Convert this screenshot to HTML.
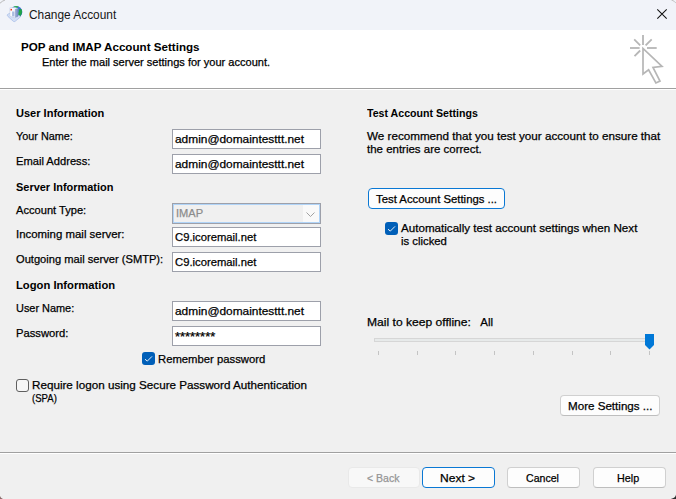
<!DOCTYPE html>
<html><head><meta charset="utf-8"><title>Change Account</title>
<style>
html,body{margin:0;padding:0}
body{width:676px;height:499px;overflow:hidden;background:#f0f0f0;position:relative;font-family:"Liberation Sans",sans-serif;font-size:12px;color:#000}
.t{position:absolute;white-space:nowrap;line-height:14px;transform-origin:0 0;-webkit-text-stroke:0.25px currentColor}
.a{position:absolute;box-sizing:border-box}
#titlebar{left:0;top:0;width:676px;height:30px;background:#f1f3f9}
#header{left:0;top:30px;width:676px;height:58px;background:#fff}
.inp{left:172px;width:149px;height:20px;border:1px solid #9da0aa;background:#fff}
.btn{height:21px;border:1px solid #d0d0d0;border-bottom-color:#bebebe;border-radius:4px;background:#fdfdfd}
.cb{width:13px;height:13px;border-radius:3px}
.cb.on{background:#005fb8}
.cb.off{background:#f6f6f6;border:1px solid #5f5f5f}
svg{position:absolute;overflow:visible}
.tick{width:1px;height:4px;top:351px;background:#c4c4c4}
</style></head><body>
<div class="a" id="titlebar"></div>
<div class="a" id="header"></div>
<div class="a" style="left:0;top:88px;width:676px;height:1px;background:#a0a0a0"></div>
<div class="a" style="left:0;top:89px;width:676px;height:1px;background:#fff"></div>
<div class="a" style="left:0;top:452px;width:676px;height:1px;background:#a0a0a0"></div>
<div class="a" style="left:0;top:453px;width:676px;height:1px;background:#fff"></div>

<!-- window corner artefacts -->
<svg width="8" height="6" style="left:0;top:0"><path d="M0 3.2 Q2.2 1 5 0" fill="none" stroke="#b8b8b8" stroke-width="1"/></svg>
<svg width="8" height="8" style="left:668px;top:491px"><path d="M8 3.8 Q7.4 7 2.8 8 L8 8 Z" fill="#2b2b2b"/></svg>
<svg width="6" height="4" style="left:670px;top:0"><path d="M1.4 0 Q4.4 0.8 6 3.2" fill="none" stroke="#c4c4c4" stroke-width="1"/></svg>
<svg width="6" height="6" style="left:0;top:493px"><path d="M0 3 Q0.5 5 3 6 L0 6 Z" fill="#8a6a6a"/></svg>

<!-- title icon -->
<svg width="16" height="16" viewBox="0 0 16 16" style="left:7px;top:6px">
  <defs>
    <linearGradient id="gl" x1="0" y1="0" x2="1" y2="1"><stop offset="0" stop-color="#4f86e4"/><stop offset="1" stop-color="#2452c2"/></linearGradient>
    <linearGradient id="bx" x1="0" y1="0" x2="1" y2="0"><stop offset="0" stop-color="#ffffff"/><stop offset="0.7" stop-color="#eef2fa"/><stop offset="1" stop-color="#c5d0e8"/></linearGradient>
    <linearGradient id="sd" x1="0" y1="0" x2="1" y2="0"><stop offset="0" stop-color="#a9b8da"/><stop offset="1" stop-color="#7188c2"/></linearGradient>
  </defs>
  <circle cx="9.3" cy="5.9" r="6" fill="url(#gl)"/>
  <path d="M6.4 0.7 Q9 -0.6 11.6 0.5 Q10.6 2.4 8.4 2 Z" fill="#2fb04c"/>
  <path d="M11.4 3.6 Q13 2.6 14.6 3.2 Q16 7 13 10.6 Q10.6 9.6 11.2 6.6 Q12.4 5.6 11.4 3.6 Z" fill="#1fa347"/>
  <path d="M0.3 9.4 Q0 8.5 1.4 7.9 L3 7.2 L13.2 10 Q13.7 10.8 12.6 11.7 L8.1 15.3 Q7.2 16 6.3 15.3 L0.9 10.4 Z" fill="#d3dff6" stroke="#a3b9e6" stroke-width="0.7"/>
  <path d="M2.9 1.8 L8.2 1.4 L11 2.6 L11 10.6 L7.6 11.8 L2.9 10.2 Z" fill="url(#bx)" stroke="#b4c2e0" stroke-width="0.5"/>
  <path d="M7.9 2.9 L11 2.6 L11 10.6 L7.9 11.7 Z" fill="url(#sd)"/>
  <rect x="5.1" y="5.5" width="2.3" height="4.9" fill="#a9badf"/>
  <rect x="3.5" y="2.9" width="1.5" height="1.6" fill="#f2321c"/>
</svg>

<!-- close X -->
<svg width="10" height="10" style="left:657px;top:9px"><path d="M0.3 0.3 L9.7 9.7 M9.7 0.3 L0.3 9.7" stroke="#111" stroke-width="1.05" fill="none"/></svg>

<!-- header cursor/click icon -->
<svg width="40" height="56" viewBox="626 32 40 56" style="left:626px;top:32px">
  <g stroke="#b6b6b6" stroke-width="1.8" fill="none" stroke-linecap="butt">
    <path d="M643 35 V45"/>
    <path d="M630 48 H639.6"/>
    <path d="M647 48 H656.7"/>
    <path d="M634.2 39.4 L640.2 45.4"/>
    <path d="M651.7 39.4 L645.6 45.4"/>
    <path d="M640.2 50.5 L634.5 56.2"/>
  </g>
  <path d="M643 48.5 L643 74 L648.6 69.8 L655.9 83 L660 81 L653 67.4 L662 66.3 Z" fill="#fff" stroke="#b6b6b6" stroke-width="1.7" stroke-linejoin="miter"/>
</svg>

<!-- inputs -->
<div class="a inp" style="top:129px"></div>
<div class="a inp" style="top:154px"></div>
<div class="a" style="left:172px;top:203px;width:149px;height:21px;border:1px solid #9da0aa;background:#f0f0f0"><div class="a" style="left:0;top:0;width:147px;height:19px;border:1px solid #b0d4f8"></div><div class="a" style="left:130px;top:1px;width:16px;height:17px;background:#f9f9f9"></div><svg width="10" height="6" style="left:132.5px;top:8.4px"><path d="M0.5 0.5 L4.5 4.5 L8.5 0.5" fill="none" stroke="#a2a2a2" stroke-width="1"/></svg></div>
<div class="a inp" style="top:227px"></div>
<div class="a inp" style="top:252px"></div>
<div class="a inp" style="top:301px"></div>
<div class="a inp" style="top:326px"></div>

<!-- checkboxes -->
<div class="a cb on" style="left:142px;top:352px"><svg width="13" height="13" style="left:0;top:0"><path d="M3 7.2 L5.3 9.1 L10 4.4" fill="none" stroke="#f2f6fc" stroke-width="0.95"/></svg></div>
<div class="a cb off" style="left:16px;top:379px"></div>
<div class="a cb on" style="left:385px;top:222px"><svg width="13" height="13" style="left:0;top:0"><path d="M3 7.2 L5.3 9.1 L10 4.4" fill="none" stroke="#f2f6fc" stroke-width="0.95"/></svg></div>

<!-- buttons -->
<div class="a btn" style="left:368px;top:188px;width:137px;border-color:#0a78d4"></div>
<div class="a btn" style="left:560px;top:395px;width:100px"></div>
<div class="a btn" style="left:348px;top:467px;width:72px;background:#f8f8f8;border-color:#e9e9e9"></div>
<div class="a btn" style="left:422px;top:467px;width:73px;border-color:#0a78d4"></div>
<div class="a btn" style="left:507px;top:467px;width:73px"></div>
<div class="a btn" style="left:593px;top:467px;width:73px"></div>

<!-- slider -->
<div class="a" style="left:374px;top:338px;width:280px;height:4px;border:1px solid #d6d6d6;background:#e7eaea"></div>
<div class="a tick" style="left:378px"></div><div class="a tick" style="left:417px"></div><div class="a tick" style="left:455px"></div><div class="a tick" style="left:494px"></div><div class="a tick" style="left:533px"></div><div class="a tick" style="left:572px"></div><div class="a tick" style="left:610px"></div><div class="a tick" style="left:649px"></div>
<svg width="10" height="16" style="left:645px;top:334px"><path d="M0 0 H9 V11 L4.5 15.4 L0 11 Z" fill="#0078d7"/></svg>

<div class="t" id="t_title" style="left:28.80px;top:8px;font-size:12px;-webkit-text-stroke:0;color:#161616;transform:scaleX(0.9905);">Change Account</div>
<div class="t" id="t_h1" style="left:20.79px;top:40px;font-size:11px;font-weight:bold;-webkit-text-stroke:0;transform:scaleX(1.0558);">POP and IMAP Account Settings</div>
<div class="t" id="t_h2" style="left:41.81px;top:55px;font-size:11px;transform:scaleX(1.0026);">Enter the mail server settings for your account.</div>
<div class="t" id="t_ui" style="left:15.69px;top:106px;font-size:11.5px;font-weight:bold;-webkit-text-stroke:0;transform:scaleX(0.9600);">User Information</div>
<div class="t" id="t_yn" style="left:16.22px;top:129px;font-size:11.5px;transform:scaleX(0.9423);">Your Name:</div>
<div class="t" id="t_ea" style="left:15.80px;top:154px;font-size:11.5px;transform:scaleX(0.9697);">Email Address:</div>
<div class="t" id="t_si" style="left:15.53px;top:180px;font-size:11.5px;font-weight:bold;-webkit-text-stroke:0;transform:scaleX(0.9530);">Server Information</div>
<div class="t" id="t_at" style="left:15.79px;top:203px;font-size:11.5px;transform:scaleX(0.9661);">Account Type:</div>
<div class="t" id="t_im" style="left:16.07px;top:227px;font-size:11.5px;transform:scaleX(0.9925);">Incoming mail server:</div>
<div class="t" id="t_om" style="left:16.30px;top:252px;font-size:11.5px;transform:scaleX(0.9676);">Outgoing mail server (SMTP):</div>
<div class="t" id="t_li" style="left:15.61px;top:278px;font-size:11.5px;font-weight:bold;-webkit-text-stroke:0;transform:scaleX(0.9760);">Logon Information</div>
<div class="t" id="t_un" style="left:15.85px;top:301px;font-size:11.5px;transform:scaleX(0.9489);">User Name:</div>
<div class="t" id="t_pw" style="left:15.80px;top:326px;font-size:11.5px;transform:scaleX(0.9755);">Password:</div>
<div class="t" id="i1" style="left:174.98px;top:132px;font-size:11.5px;transform:scaleX(1.0337);">admin@domaintesttt.net</div>
<div class="t" id="i2" style="left:174.98px;top:157px;font-size:11.5px;transform:scaleX(1.0337);">admin@domaintesttt.net</div>
<div class="t" id="i3" style="left:176.23px;top:206px;font-size:11.5px;color:#8c8c8c;transform:scaleX(0.9633);">IMAP</div>
<div class="t" id="i4" style="left:174.97px;top:230px;font-size:11.5px;transform:scaleX(0.9790);">C9.icoremail.net</div>
<div class="t" id="i5" style="left:174.97px;top:255px;font-size:11.5px;transform:scaleX(0.9790);">C9.icoremail.net</div>
<div class="t" id="i6" style="left:174.98px;top:304px;font-size:11.5px;transform:scaleX(1.0337);">admin@domaintesttt.net</div>
<div class="t" id="i7" style="left:175.28px;top:330px;font-size:13px;transform:scaleX(0.9925);">********</div>
<div class="t" id="t_rp" style="left:158.14px;top:352px;font-size:11.5px;transform:scaleX(0.9812);">Remember password</div>
<div class="t" id="t_spa" style="left:31.77px;top:378px;font-size:11.5px;transform:scaleX(1.0147);">Require logon using Secure Password Authentication</div>
<div class="t" id="t_spa2" style="left:32.01px;top:391px;font-size:11.5px;transform:scaleX(0.8323);">(SPA)</div>
<div class="t" id="t_tas" style="left:366.93px;top:106px;font-size:11.5px;font-weight:bold;-webkit-text-stroke:0;transform:scaleX(0.9231);">Test Account Settings</div>
<div class="t" id="t_rec1" style="left:366.95px;top:129px;font-size:11.5px;transform:scaleX(1.0136);">We recommend that you test your account to ensure that</div>
<div class="t" id="t_rec2" style="left:366.80px;top:142px;font-size:11.5px;transform:scaleX(0.9979);">the entries are correct.</div>
<div class="t" id="t_btest" style="left:376.42px;top:192px;font-size:11.5px;transform:scaleX(0.9860);">Test Account Settings ...</div>
<div class="t" id="t_auto1" style="left:401.18px;top:221px;font-size:11.5px;transform:scaleX(1.0103);">Automatically test account settings when Next</div>
<div class="t" id="t_auto2" style="left:400.76px;top:234px;font-size:11.5px;transform:scaleX(0.9840);">is clicked</div>
<div class="t" id="t_mko" style="left:366.74px;top:315px;font-size:11.5px;transform:scaleX(1.0511);">Mail to keep offline:</div>
<div class="t" id="t_all" style="left:480.25px;top:315px;font-size:11.5px;transform:scaleX(1.0000);">All</div>
<div class="t" id="t_bmore" style="left:567.77px;top:399px;font-size:11.5px;transform:scaleX(1.0095);">More Settings ...</div>
<div class="t" id="t_bback" style="left:367.21px;top:471px;font-size:11.5px;color:#959595;transform:scaleX(0.9140);">&lt; Back</div>
<div class="t" id="t_bnext" style="left:439.75px;top:471px;font-size:11.5px;transform:scaleX(1.0468);">Next &gt;</div>
<div class="t" id="t_bcancel" style="left:526.00px;top:471px;font-size:11.5px;transform:scaleX(0.9190);">Cancel</div>
<div class="t" id="t_bhelp" style="left:617.15px;top:471px;font-size:11.5px;transform:scaleX(0.9357);">Help</div>
</body></html>
